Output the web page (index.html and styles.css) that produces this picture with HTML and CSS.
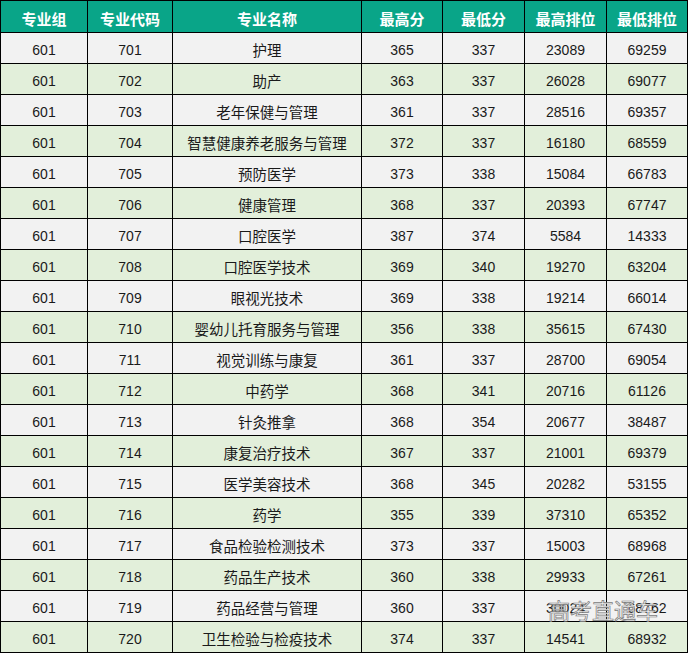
FILE: index.html
```html
<!DOCTYPE html>
<html lang="zh">
<head>
<meta charset="utf-8">
<link rel="stylesheet" href="styles.css">
</head>
<body>
<div class="wrap">
<table class="grid">
<colgroup>
<col class="c1"><col class="c2"><col class="c3"><col class="c4"><col class="c5"><col class="c6"><col class="c7">
</colgroup>
<thead>
<tr><th>专业组</th><th>专业代码</th><th>专业名称</th><th>最高分</th><th>最低分</th><th>最高排位</th><th>最低排位</th></tr>
</thead>
<tbody>
<tr><td>601</td><td>701</td><td class="nm">护理</td><td>365</td><td>337</td><td>23089</td><td>69259</td></tr>
<tr><td>601</td><td>702</td><td class="nm">助产</td><td>363</td><td>337</td><td>26028</td><td>69077</td></tr>
<tr><td>601</td><td>703</td><td class="nm">老年保健与管理</td><td>361</td><td>337</td><td>28516</td><td>69357</td></tr>
<tr><td>601</td><td>704</td><td class="nm">智慧健康养老服务与管理</td><td>372</td><td>337</td><td>16180</td><td>68559</td></tr>
<tr><td>601</td><td>705</td><td class="nm">预防医学</td><td>373</td><td>338</td><td>15084</td><td>66783</td></tr>
<tr><td>601</td><td>706</td><td class="nm">健康管理</td><td>368</td><td>337</td><td>20393</td><td>67747</td></tr>
<tr><td>601</td><td>707</td><td class="nm">口腔医学</td><td>387</td><td>374</td><td>5584</td><td>14333</td></tr>
<tr><td>601</td><td>708</td><td class="nm">口腔医学技术</td><td>369</td><td>340</td><td>19270</td><td>63204</td></tr>
<tr><td>601</td><td>709</td><td class="nm">眼视光技术</td><td>369</td><td>338</td><td>19214</td><td>66014</td></tr>
<tr><td>601</td><td>710</td><td class="nm">婴幼儿托育服务与管理</td><td>356</td><td>338</td><td>35615</td><td>67430</td></tr>
<tr><td>601</td><td>711</td><td class="nm">视觉训练与康复</td><td>361</td><td>337</td><td>28700</td><td>69054</td></tr>
<tr><td>601</td><td>712</td><td class="nm">中药学</td><td>368</td><td>341</td><td>20716</td><td>61126</td></tr>
<tr><td>601</td><td>713</td><td class="nm">针灸推拿</td><td>368</td><td>354</td><td>20677</td><td>38487</td></tr>
<tr><td>601</td><td>714</td><td class="nm">康复治疗技术</td><td>367</td><td>337</td><td>21001</td><td>69379</td></tr>
<tr><td>601</td><td>715</td><td class="nm">医学美容技术</td><td>368</td><td>345</td><td>20282</td><td>53155</td></tr>
<tr><td>601</td><td>716</td><td class="nm">药学</td><td>355</td><td>339</td><td>37310</td><td>65352</td></tr>
<tr><td>601</td><td>717</td><td class="nm">食品检验检测技术</td><td>373</td><td>337</td><td>15003</td><td>68968</td></tr>
<tr><td>601</td><td>718</td><td class="nm">药品生产技术</td><td>360</td><td>338</td><td>29933</td><td>67261</td></tr>
<tr><td>601</td><td>719</td><td class="nm">药品经营与管理</td><td>360</td><td>337</td><td>30024</td><td>68762</td></tr>
<tr><td>601</td><td>720</td><td class="nm">卫生检验与检疫技术</td><td>374</td><td>337</td><td>14541</td><td>68932</td></tr>
</tbody>
</table>
<div class="mark">高考直通车</div>
</div>
</body>
</html>
```
FILE: styles.css
```css
html, body {
  margin: 0;
  padding: 0;
  background: #ffffff;
}
.wrap {
  position: relative;
  width: 689px;
  height: 653px;
}
.grid {
  border-collapse: collapse;
  table-layout: fixed;
  width: 687px;
  font-family: "Liberation Sans", "Noto Sans CJK SC", sans-serif;
  color: #1a1a1a;
}
.c1 { width: 87px; }
.c2 { width: 85px; }
.c3 { width: 189px; }
.c4 { width: 81px; }
.c5 { width: 82px; }
.c6 { width: 82px; }
.c7 { width: 81px; }
.grid th, .grid td {
  border: 1px solid #000;
  padding: 0;
  text-align: center;
  vertical-align: middle;
  box-sizing: border-box;
}
.grid th {
  height: 32px;
  background: #09a588;
  color: #ffffff;
  font-family: "Noto Sans CJK SC", sans-serif;
  font-weight: bold;
  font-size: 15px;
  padding-top: 4px;
}
.grid td {
  height: 31px;
  font-size: 14px;
  padding-top: 4px;
}
.grid td.nm {
  font-family: "Noto Sans CJK SC", sans-serif;
  font-size: 14.5px;
  padding-top: 3px;
}
.grid tbody tr:nth-child(odd) td { background: #f2f2f2; }
.grid tbody tr:nth-child(even) td { background: #e2efda; }
.mark {
  position: absolute;
  left: 548px;
  top: 596px;
  font-family: "Noto Sans CJK SC", sans-serif;
  font-size: 22px;
  line-height: 26px;
  color: rgba(245, 245, 245, 0.85);
  -webkit-text-stroke: 0.7px #7a7a7a;
}
```
